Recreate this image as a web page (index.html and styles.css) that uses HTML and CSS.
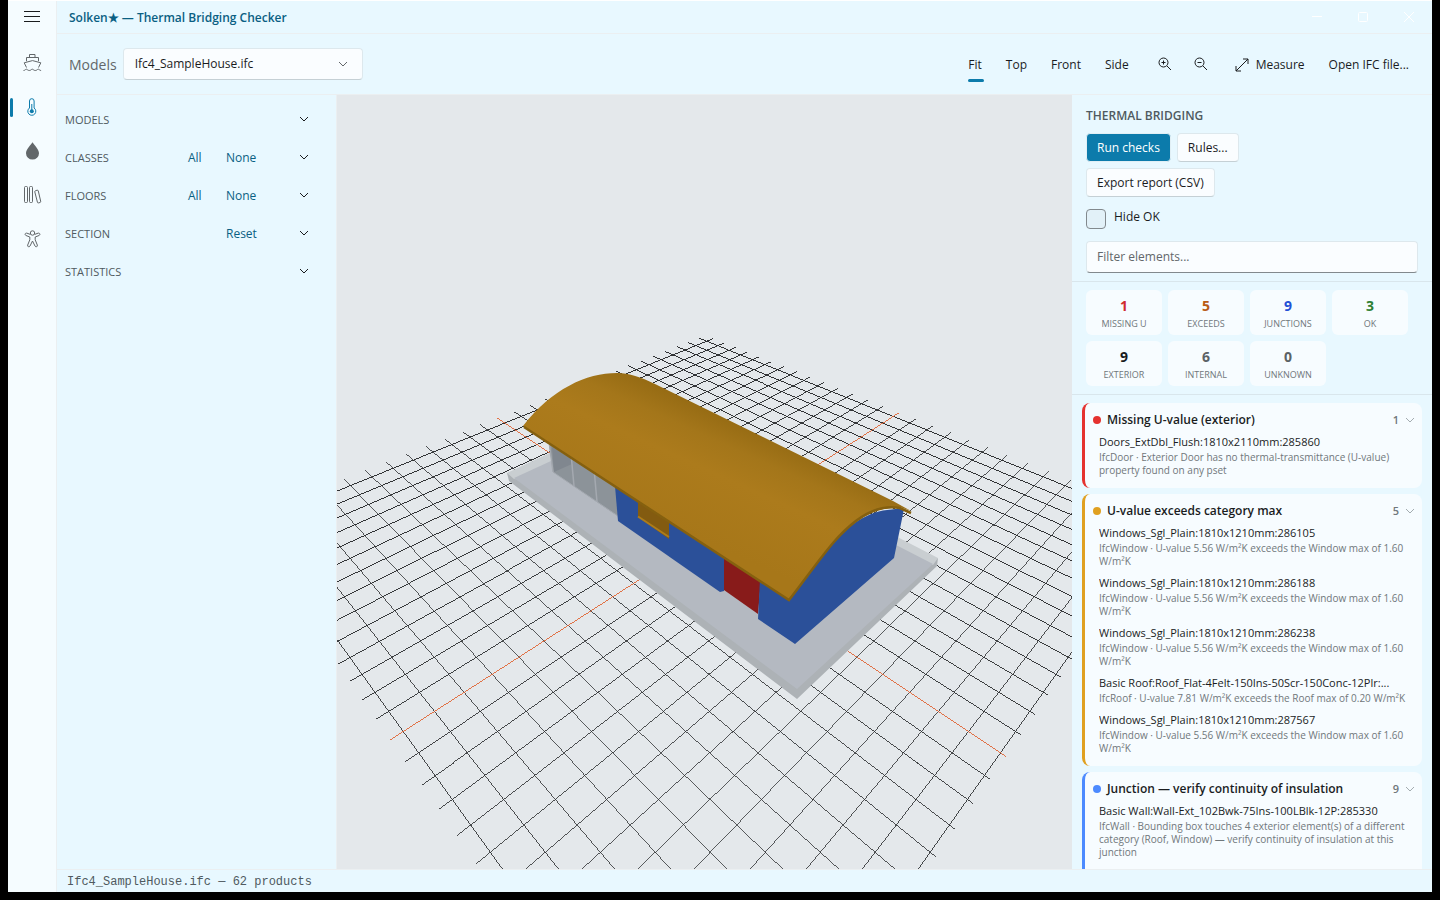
FILE: index.html
```html
<!DOCTYPE html>
<html lang="en">
<head>
<meta charset="utf-8">
<meta name="viewport" content="width=device-width, initial-scale=1">
<title>Solken — Thermal Bridging Checker</title>
<link rel="stylesheet" href="styles.css">
</head>
<body>
<div class="window">
  <nav class="rail" aria-label="Tools">
    <button class="rail-btn menu" aria-label="Menu"><svg viewBox="0 0 20 20"><path d="M2 4.500h16M2 9.500h16M2 14.500h16"/></svg></button>
    <button class="rail-btn" aria-label="Ship"><svg viewBox="0 0 20 20"><path d="M7.500 4V1.500h5.500V4M4.500 8.200V4.500h12v3.700M4.500 14.500 2.200 9.800 10.500 7.600l8.300 2.200L16.500 14.500M1.500 17.500c1.600 0 1.900-1.300 2.800-1.300 1 0 1.400 1.300 3 1.300s2-1.300 3-1.300 1.400 1.300 3 1.300 2-1.300 3-1.300c1 0 1.300 1.300 2.800 1.300"/></svg></button>
    <button class="rail-btn active" aria-label="Thermal bridging"><svg viewBox="0 0 20 20"><path d="M7.500 11V4a2.300 2.300 0 0 1 4.600 0v7a4 4 0 1 1-4.600 0zM9.800 7v6"/><circle class="solid" cx="9.800" cy="14.200" r="2"/></svg></button>
    <button class="rail-btn" aria-label="Moisture"><svg viewBox="0 0 20 20"><path class="solid" d="M10.500 1.200c1.500 2.700 6.500 6.800 6.500 11a6.500 6.300 0 0 1-13 0C4 8 9 3.900 10.500 1.200z"/></svg></button>
    <button class="rail-btn" aria-label="Library"><svg viewBox="0 0 20 20"><rect x="2.500" y="1.500" width="3" height="16" rx="1"/><rect x="7.500" y="1.500" width="3" height="16" rx="1"/><path d="M13.500 5.700l1.600-.5a1 1 0 0 1 1.200.8l2.400 10.300a1 1 0 0 1-.7 1.200l-1.400.4a1 1 0 0 1-1.200-.8L12.800 6.900a1 1 0 0 1 .7-1.200z"/></svg></button>
    <button class="rail-btn" aria-label="Accessibility"><svg viewBox="0 0 20 20"><circle cx="10.500" cy="4" r="2.200"/><path d="M8.300 5.400 5 4.200c-1.700-.6-2.700 1.500-1 2.300L7.800 8v2.800L5.700 16c-.6 1.700 1.500 2.600 2.300 1l2.500-5 2.500 5c.8 1.600 2.900.7 2.300-1l-2.100-5.200V8L17 6.500c1.700-.8.700-2.900-1-2.300l-3.300 1.200"/></svg></button>
  </nav>
  <div class="app">
    <header class="titlebar">
      <h1>Solken★ — Thermal Bridging Checker</h1>
      <div class="window-buttons">
        <button aria-label="Minimize"><svg viewBox="0 0 12 12"><path d="M1 5.500h10"/></svg></button>
        <button aria-label="Maximize"><svg viewBox="0 0 12 12"><rect x="1.500" y="1.500" width="9" height="9" rx="1"/></svg></button>
        <button aria-label="Close"><svg viewBox="0 0 12 12"><path d="M1 1l10 10M11 1L1 11"/></svg></button>
      </div>
    </header>
    <div class="toolbar">
      <label class="models-label" for="model">Models</label>
      <div class="select-wrap">
        <select id="model"><option>Ifc4_SampleHouse.ifc</option></select>
        <svg class="chevron" viewBox="0 0 12 12"><path d="M2 4l4 4 4-4"/></svg>
      </div>
      <div class="actions">
        <div class="views">
          <button class="tool selected">Fit</button>
          <button class="tool">Top</button>
          <button class="tool">Front</button>
          <button class="tool">Side</button>
        </div>
        <div class="zooms">
          <button class="tool icon" aria-label="Zoom in"><svg viewBox="0 0 14 14"><circle cx="5.500" cy="5.500" r="4.500"/><path d="M9 9l4 4M5.500 3.500v4M3.500 5.500h4"/></svg></button>
          <button class="tool icon" aria-label="Zoom out"><svg viewBox="0 0 14 14"><circle cx="5.500" cy="5.500" r="4.500"/><path d="M9 9l4 4M3.500 5.500h4"/></svg></button>
        </div>
        <button class="tool"><svg viewBox="0 0 14 14"><path d="M1 13L13 1M8 1h5v5M1 8v5h5"/></svg>Measure</button>
        <button class="tool">Open IFC file...</button>
      </div>
    </div>
    <div class="content">
      <aside class="sections">
        <div class="section"><h2>MODELS</h2><button class="fold" aria-label="Expand models"><svg class="chevron" viewBox="0 0 12 12"><path d="M2 4l4 4 4-4"/></svg></button></div>
        <div class="section"><h2>CLASSES</h2><button class="link all">All</button><button class="link none">None</button><button class="fold" aria-label="Expand classes"><svg class="chevron" viewBox="0 0 12 12"><path d="M2 4l4 4 4-4"/></svg></button></div>
        <div class="section"><h2>FLOORS</h2><button class="link all">All</button><button class="link none">None</button><button class="fold" aria-label="Expand floors"><svg class="chevron" viewBox="0 0 12 12"><path d="M2 4l4 4 4-4"/></svg></button></div>
        <div class="section"><h2>SECTION</h2><button class="link none">Reset</button><button class="fold" aria-label="Expand section"><svg class="chevron" viewBox="0 0 12 12"><path d="M2 4l4 4 4-4"/></svg></button></div>
        <div class="section"><h2>STATISTICS</h2><button class="fold" aria-label="Expand statistics"><svg class="chevron" viewBox="0 0 12 12"><path d="M2 4l4 4 4-4"/></svg></button></div>
      </aside>
      <main class="viewport">
        <svg class="scene" viewBox="337 95 735 774" preserveAspectRatio="xMidYMid slice" role="img" aria-label="3D view of the house model">
          <defs>
            <linearGradient id="roof" gradientUnits="userSpaceOnUse" x1="740" y1="425" x2="690" y2="535">
              <stop offset="0" stop-color="#976c14"/><stop offset="0.200" stop-color="#a4761a"/><stop offset="0.450" stop-color="#ac7b1c"/><stop offset="1" stop-color="#a77719"/>
            </linearGradient>
          </defs>
          <g id="grid"></g>
          <polygon fill="#adb2b6" points="507,473 514,472 797,685 933,560 938,558 937,566 797,699 509,481"/>
          <polygon fill="#c9ced1" points="507,473 552,452 640,440 880,528 938,558 933,565 700,500 514,479"/>
          <polygon fill="#b4b9c1" points="514,478 551,461 640,460 898,546 933,564 797,689"/>
          <polygon fill="#8c9399" points="549,444 616,487 619,517 553,472"/>
          <polygon fill="#80878f" points="552,447 572,459 572,464 554,472"/>
          <path d="M549.500 445L553 472M571.500 459L574 486M594.500 474L597 502" stroke="#a4a9b0" stroke-width="1.500"/>
          <path d="M553 472L618 516" stroke="#a4a9b0"/>
          <polygon fill="#2b5099" points="615,486 726,556 724,591 720,592 618,521"/>
          <polygon fill="#835b10" points="638,498 669,520 669,539 638,517"/>
          <path d="M638 516.500L669 537" stroke="#ac7c1b" stroke-width="2"/>
          <polygon fill="#881b1a" points="724,556 761,580 758,614 724,590"/>
          <path fill="#2b5099" d="M760 579L789 599C801 585 817 562 833 543C857 515 880 508 904 509L894 558L795 644L758 619z"/>
          <path fill="url(#roof)" d="M523 426C552 389 586 373 617 373C630 373 640 377 655 384L893 501L911 511L900 507C880 507 857 515 833 543C817 562 801 585 789 600z"/>
          <path d="M524 427L789 600C801 585 817 562 833 543C857 515 880 504 900 508L911 513" fill="none" stroke="#85600f" stroke-width="2.500"/>
        </svg>
      </main>
      <aside class="results">
        <section class="controls">
          <h2>THERMAL BRIDGING</h2>
          <div class="buttons">
            <button class="btn primary">Run checks</button>
            <button class="btn">Rules...</button>
            <button class="btn">Export report (CSV)</button>
          </div>
          <label class="check"><input type="checkbox"><span>Hide OK</span></label>
          <input class="filter" type="text" aria-label="Filter elements" placeholder="Filter elements...">
        </section>
        <section class="stats">
          <div class="stat red"><b>1</b><span>MISSING U</span></div>
          <div class="stat orange"><b>5</b><span>EXCEEDS</span></div>
          <div class="stat blue"><b>9</b><span>JUNCTIONS</span></div>
          <div class="stat green"><b>3</b><span>OK</span></div>
          <div class="stat"><b>9</b><span>EXTERIOR</span></div>
          <div class="stat gray"><b>6</b><span>INTERNAL</span></div>
          <div class="stat gray"><b>0</b><span>UNKNOWN</span></div>
        </section>
        <section class="groups">
          <article class="group missing">
            <header><i class="dot"></i><h3>Missing U-value (exterior)</h3><span class="count">1</span><svg class="chevron" viewBox="0 0 12 12"><path d="M2 4l4 4 4-4"/></svg></header>
            <div class="item"><h4>Doors_ExtDbl_Flush:1810x2110mm:285860</h4><p>IfcDoor · Exterior Door has no thermal-transmittance (U-value) property found on any pset</p></div>
          </article>
          <article class="group exceeds">
            <header><i class="dot"></i><h3>U-value exceeds category max</h3><span class="count">5</span><svg class="chevron" viewBox="0 0 12 12"><path d="M2 4l4 4 4-4"/></svg></header>
            <div class="item"><h4>Windows_Sgl_Plain:1810x1210mm:286105</h4><p>IfcWindow · U-value 5.56 W/m²K exceeds the Window max of 1.60 W/m²K</p></div>
            <div class="item"><h4>Windows_Sgl_Plain:1810x1210mm:286188</h4><p>IfcWindow · U-value 5.56 W/m²K exceeds the Window max of 1.60 W/m²K</p></div>
            <div class="item"><h4>Windows_Sgl_Plain:1810x1210mm:286238</h4><p>IfcWindow · U-value 5.56 W/m²K exceeds the Window max of 1.60 W/m²K</p></div>
            <div class="item"><h4>Basic Roof:Roof_Flat-4Felt-150Ins-50Scr-150Conc-12Plr:...</h4><p>IfcRoof · U-value 7.81 W/m²K exceeds the Roof max of 0.20 W/m²K</p></div>
            <div class="item"><h4>Windows_Sgl_Plain:1810x1210mm:287567</h4><p>IfcWindow · U-value 5.56 W/m²K exceeds the Window max of 1.60 W/m²K</p></div>
          </article>
          <article class="group junction">
            <header><i class="dot"></i><h3>Junction — verify continuity of insulation</h3><span class="count">9</span><svg class="chevron" viewBox="0 0 12 12"><path d="M2 4l4 4 4-4"/></svg></header>
            <div class="item"><h4>Basic Wall:Wall-Ext_102Bwk-75Ins-100LBlk-12P:285330</h4><p>IfcWall · Bounding box touches 4 exterior element(s) of a different category (Roof, Window) — verify continuity of insulation at this junction</p></div>
          </article>
        </section>
      </aside>
    </div>
    <footer class="status">Ifc4_SampleHouse.ifc — 62 products</footer>
  </div>
</div>
<script src="scene.js"></script>
</body>
</html>
```

FILE: styles.css
```css
* { box-sizing: border-box; }
body { margin: 0; background: #000; color: #1a1c1e; font-family: "Open Sans", "Noto Sans", sans-serif; font-size: 12px; line-height: 16px; }
h1, h2, h3, h4, p { margin: 0; font-size: inherit; font-weight: 400; }
button, input, select { font: inherit; color: inherit; margin: 0; }
button { border: 0; padding: 0; background: none; }
svg { display: block; fill: none; stroke: currentColor; }

.window { display: flex; height: calc(100vh - 8px); margin: 0 8px; background: #e8f8ff; border-top: 1px solid #fff; }

.rail { flex: none; width: 49px; padding-top: 2px; background: #f5fcff; border-right: 1px solid #ebeff1; }
.rail-btn { position: relative; display: flex; align-items: center; justify-content: center; width: 48px; height: 44px; color: #62676a; }
.rail-btn svg { width: 20px; height: 20px; }
.rail-btn .solid { fill: currentColor; stroke: none; }
.menu { height: 38px; padding-bottom: 11px; color: #1a1c1e; }
.active { color: #0c7bab; }
.active::before { content: ""; position: absolute; left: 2px; top: 13px; width: 3px; height: 19px; border-radius: 2px; background: #0c7bab; }

.app { flex: 1; min-width: 0; display: flex; flex-direction: column; }
.titlebar { flex: none; display: flex; align-items: center; justify-content: space-between; height: 33px; padding-left: 12px; border-bottom: 1px solid #ebeff1; }
.titlebar h1 { padding-top: 2px; color: #0a5f83; font-weight: 600; }
.window-buttons { display: flex; color: #fff; }
.window-buttons button { display: flex; align-items: center; justify-content: center; width: 46px; height: 30px; }
.window-buttons svg { width: 12px; height: 12px; }

.toolbar { flex: none; display: flex; align-items: center; height: 61px; padding: 0 11px 0 12px; border-bottom: 1px solid #ebeff1; }
.models-label { padding-top: 2px; font-size: 14px; color: #62676a; }
.select-wrap { position: relative; width: 240px; margin-left: 6px; }
.select-wrap select { appearance: none; width: 100%; height: 32px; padding: 0 11px; border: 1px solid #dde8ed; border-bottom-color: #c5d0d5; border-radius: 4px; background: #fafdff; }
.select-wrap .chevron { position: absolute; right: 14px; top: 10px; color: #62676a; pointer-events: none; }
.chevron { flex: none; width: 12px; height: 12px; }
.actions { display: flex; margin-left: auto; }
.views { display: flex; margin-right: 6px; }
.zooms { display: flex; margin-right: 4px; }
.tool { position: relative; display: flex; align-items: center; height: 40px; padding: 2px 12px 0; }
.tool svg { width: 14px; height: 14px; margin-right: 7px; }
.tool.icon { padding: 0 11px; }
.tool.icon svg { margin: 0; }
.selected::after { content: ""; position: absolute; left: 12px; right: 10px; bottom: 2px; height: 3px; border-radius: 2px; background: #0c7bab; }

.content { flex: 1; min-height: 0; display: flex; }
.sections { flex: none; width: 280px; padding: 6px 26px 0 8px; border-right: 1px solid #ebeff1; }
.section { display: grid; grid-template-columns: 123px 38px 72px 12px; align-items: center; height: 38px; }
.section h2 { color: #4f5a60; font-size: 11px; }
.link { color: #0a5f83; text-align: left; }
.all { grid-column: 2; }
.none { grid-column: 3; }
.fold { grid-column: 4; padding-bottom: 2px; }

.viewport { flex: 1; min-width: 0; background: #e4e8eb; }
.scene { width: 100%; height: 100%; stroke: none; }
.grid-line { stroke: #2a2c2e; shape-rendering: crispEdges; }
.axis-line { stroke: #e0612f; shape-rendering: crispEdges; }

.results { flex: none; width: 360px; display: flex; flex-direction: column; overflow: hidden; }
.controls { flex: none; padding: 13px 14px 8px; border-bottom: 1px solid #d9e6ec; }
.controls h2 { font-weight: 600; color: #4f5a60; }
.buttons { display: flex; flex-wrap: wrap; gap: 6px; width: 200px; margin-top: 9px; }
.btn { height: 29px; padding: 0 10px; border: 1px solid #dde8ed; border-bottom-color: #c5d0d5; border-radius: 4px; background: #fafdff; }
.primary { background: #0c7bab; border-color: #e1eff5; color: #fff; }
.check { display: flex; gap: 8px; margin-top: 12px; }
.check input { appearance: none; width: 20px; height: 20px; border: 1px solid #82898d; border-radius: 4px; background: #e2f1f8; }
.filter { display: block; width: 100%; height: 32px; margin-top: 12px; padding: 0 10px 2px; border: 1px solid #dde8ed; border-bottom-color: #82898d; border-radius: 4px; background: #fafdff; }
.filter::placeholder { color: #62676a; opacity: 1; }

.stats { flex: none; display: grid; grid-template-columns: repeat(4, 76px); gap: 6px; padding: 8px 14px; border-bottom: 1px solid #d9e6ec; }
.stat { display: flex; flex-direction: column; align-items: center; height: 45px; padding-top: 7px; border-radius: 6px; background: #f7fcff; }
.stat b { font-size: 14px; line-height: 18px; }
.stat span { color: #70777b; font-size: 9px; line-height: 18px; }
.red b { color: #d02b2e; }
.orange b { color: #b85b14; }
.blue b { color: #2450d6; }
.green b { color: #2e8034; }
.gray b { color: #5b6266; }

.groups { flex: 1; min-height: 0; overflow: hidden; padding: 8px 10px 0; }
.group { margin-bottom: 6px; padding: 8px 6px 8px 8px; border-left: 3px solid; border-radius: 8px; background: #f7fcff; }
.group header { display: flex; align-items: center; height: 18px; margin-bottom: 1px; color: #1a1c1e; }
.dot { width: 8px; height: 8px; margin-right: 6px; border-radius: 50%; }
.group h3 { flex: 1; font-weight: 600; }
.count { margin-right: 5px; font-size: 11px; font-weight: 600; color: #70777b; }
.group .chevron { color: #a4acb0; }
.item { padding: 4px 6px 3px; color: #1a1c1e; }
.item h4 { margin-bottom: 1px; white-space: nowrap; overflow: hidden; text-overflow: ellipsis; font-size: 11px; line-height: 16px; }
.item p { color: #70777b; font-size: 10px; line-height: 13px; }
.missing { border-color: #e5322f; }
.missing .dot { background: #e5322f; }
.exceeds { border-color: #e0a020; }
.exceeds .dot { background: #e0a020; }
.junction { border-color: #4c8aff; }
.junction .dot { background: #4c8aff; }
.junction .item { padding-bottom: 40px; }

.status { flex: none; height: 23px; padding: 1px 10px 0; border-top: 1px solid #ebeff1; color: #4f5a60; font-family: "Liberation Mono", monospace; line-height: 23px; }
```

FILE: scene.js
```js
// Floor grid: one line per world unit, seen in perspective at 45 degrees.
const near = { p: 12.4, q: 13.15 };
const far = { p: -15.6, q: -14.75 };

function project(p, q) {
  const scale = 1 / (0.0018599 - 0.00003965 * (p + q));
  return [704.5 + 0.0326 * (q - p - 0.79) * scale, 9 + scale];
}

function addLine(from, to, isAxis) {
  const line = document.createElementNS("http://www.w3.org/2000/svg", "line");
  const [x1, y1] = project(...from);
  const [x2, y2] = project(...to);
  Object.entries({ x1, y1, x2, y2 }).forEach(([k, v]) => line.setAttribute(k, v.toFixed(1)));
  // Keeps diagonal lines one device pixel thick when they are not antialiased.
  const dx = Math.abs(x2 - x1);
  const dy = Math.abs(y2 - y1);
  line.setAttribute("stroke-width", (1.05 * Math.max(dx, dy) / Math.hypot(dx, dy)).toFixed(2));
  line.setAttribute("class", isAxis ? "axis-line" : "grid-line");
  document.getElementById("grid").appendChild(line);
}

for (const axis of [false, true]) {
  for (let p = Math.ceil(far.p); p <= near.p; p++) {
    if ((p === 0) === axis) addLine([p, far.q], [p, near.q], axis);
  }
  for (let q = Math.ceil(far.q); q <= near.q; q++) {
    if ((q === 0) === axis) addLine([far.p, q], [near.p, q], axis);
  }
}
```
